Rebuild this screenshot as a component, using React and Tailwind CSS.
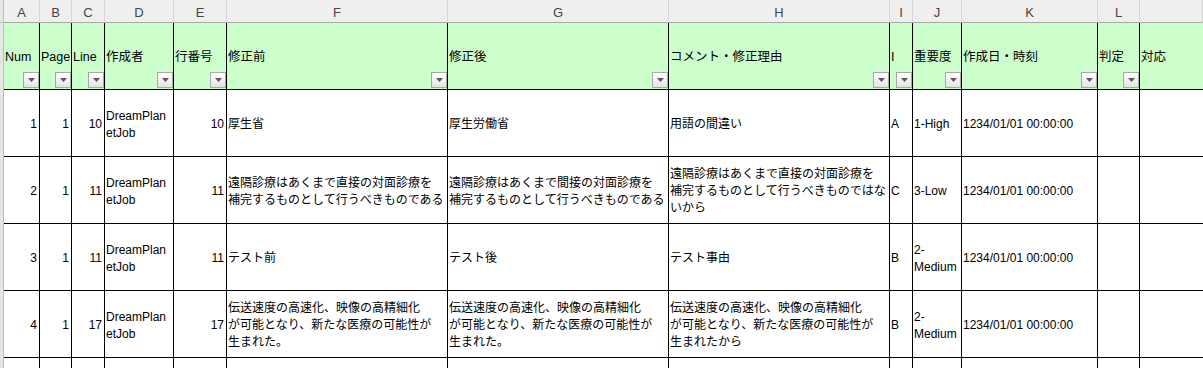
import React from 'react';

const cols = ['A', 'B', 'C', 'D', 'E', 'F', 'G', 'H', 'I', 'J', 'K', 'L', ''];

const headers = [
  { label: 'Num', filter: true },
  { label: 'Page', filter: true },
  { label: 'Line', filter: true },
  { label: '作成者', filter: true },
  { label: '行番号', filter: true },
  { label: '修正前', filter: true },
  { label: '修正後', filter: true },
  { label: 'コメント・修正理由', filter: true },
  { label: 'I', filter: true },
  { label: '重要度', filter: true },
  { label: '作成日・時刻', filter: true },
  { label: '判定', filter: true },
  { label: '対応', filter: false },
];

const rows = [
  {
    num: 1, page: 1, line: 10, line2: 10,
    before: ['厚生省'],
    after: ['厚生労働省'],
    reason: ['用語の間違い'],
    i: 'A', level: ['1-High'],
  },
  {
    num: 2, page: 1, line: 11, line2: 11,
    before: ['遠隔診療はあくまで直接の対面診療を', '補完するものとして行うべきものである'],
    after: ['遠隔診療はあくまで間接の対面診療を', '補完するものとして行うべきものである'],
    reason: ['遠隔診療はあくまで直接の対面診療を', '補完するものとして行うべきものではな', 'いから'],
    i: 'C', level: ['3-Low'],
  },
  {
    num: 3, page: 1, line: 11, line2: 11,
    before: ['テスト前'],
    after: ['テスト後'],
    reason: ['テスト事由'],
    i: 'B', level: ['2-', 'Medium'],
  },
  {
    num: 4, page: 1, line: 17, line2: 17,
    before: ['伝送速度の高速化、映像の高精細化', 'が可能となり、新たな医療の可能性が', '生まれた。'],
    after: ['伝送速度の高速化、映像の高精細化', 'が可能となり、新たな医療の可能性が', '生まれた。'],
    reason: ['伝送速度の高速化、映像の高精細化', 'が可能となり、新たな医療の可能性が', '生まれたから'],
    i: 'B', level: ['2-', 'Medium'],
  },
];

function FilterButton() {
  return (
    <span className="absolute right-0 bottom-[1px] w-4 h-4 border border-[#a9a9a9] bg-linear-to-b from-white to-[#e4e4e4] flex items-center justify-center">
      <svg width="7" height="4" viewBox="0 0 7 4">
        <path d="M0 0h7L3.5 4z" fill="#5a5a5a" />
      </svg>
    </span>
  );
}

function Cell({ children, right, last }) {
  return (
    <div
      className={
        'bg-white border-b border-black flex items-center pt-[3px] overflow-hidden whitespace-nowrap leading-[17px] text-[12px] ' +
        (last ? '' : 'border-r ') +
        (right ? 'justify-end pr-[2px]' : 'justify-start pl-[1px]')
      }
    >
      <div>{children}</div>
    </div>
  );
}

function Lines({ lines }) {
  return lines.map((l, i) => <div key={i}>{l}</div>);
}

export default function App() {
  return (
    <div className="w-[1203px] h-[368px] overflow-hidden bg-white text-black font-['Liberation_Sans','Noto_Sans_CJK_JP',sans-serif]">
      <div className="grid grid-cols-[4px_36px_32px_33px_69px_53px_221px_221px_221px_23px_49px_136px_42px_1fr] grid-rows-[23px_67px_67px_67px_67px_67px_67px]">
        {/* column letters */}
        <div className="bg-[#e6e6e6] border-r border-b border-[#bdbdbd]" />
        {cols.map((c, i) => (
          <div
            key={'c' + i}
            className="bg-[#efefef] border-r border-b border-r-[#d6d6d6] border-b-[#a8a8a8] flex items-center justify-center pt-[3px] text-[13px] text-[#444]"
          >
            {c}
          </div>
        ))}

        {/* header row */}
        <div className="bg-[#e6e6e6] border-r border-[#bdbdbd]" />
        {headers.map((h, i) => (
          <div
            key={'h' + i}
            className={
              'relative bg-[#ccffcc] border-b border-black flex items-center pl-[1px] pt-[2px] text-[12.5px] whitespace-nowrap overflow-hidden ' +
              (i < headers.length - 1 ? 'border-r' : '')
            }
          >
            {h.label}
            {h.filter && <FilterButton />}
          </div>
        ))}

        {/* data rows */}
        {rows.map((r, ri) => (
          <React.Fragment key={'r' + ri}>
            <div className="bg-[#e6e6e6] border-r border-[#bdbdbd]" />
            <Cell right>{r.num}</Cell>
            <Cell right>{r.page}</Cell>
            <Cell right>{r.line}</Cell>
            <Cell>
              <Lines lines={['DreamPlan', 'etJob']} />
            </Cell>
            <Cell right>{r.line2}</Cell>
            <Cell>
              <Lines lines={r.before} />
            </Cell>
            <Cell>
              <Lines lines={r.after} />
            </Cell>
            <Cell>
              <Lines lines={r.reason} />
            </Cell>
            <Cell>{r.i}</Cell>
            <Cell>
              <Lines lines={r.level} />
            </Cell>
            <Cell>1234/01/01 00:00:00</Cell>
            <Cell />
            <Cell last />
          </React.Fragment>
        ))}

        {/* partially visible row */}
        <div className="bg-[#e6e6e6] border-r border-[#bdbdbd]" />
        {cols.map((c, i) => (
          <div key={'p' + i} className={'bg-white ' + (i < cols.length - 1 ? 'border-r border-black' : '')} />
        ))}
      </div>
    </div>
  );
}
